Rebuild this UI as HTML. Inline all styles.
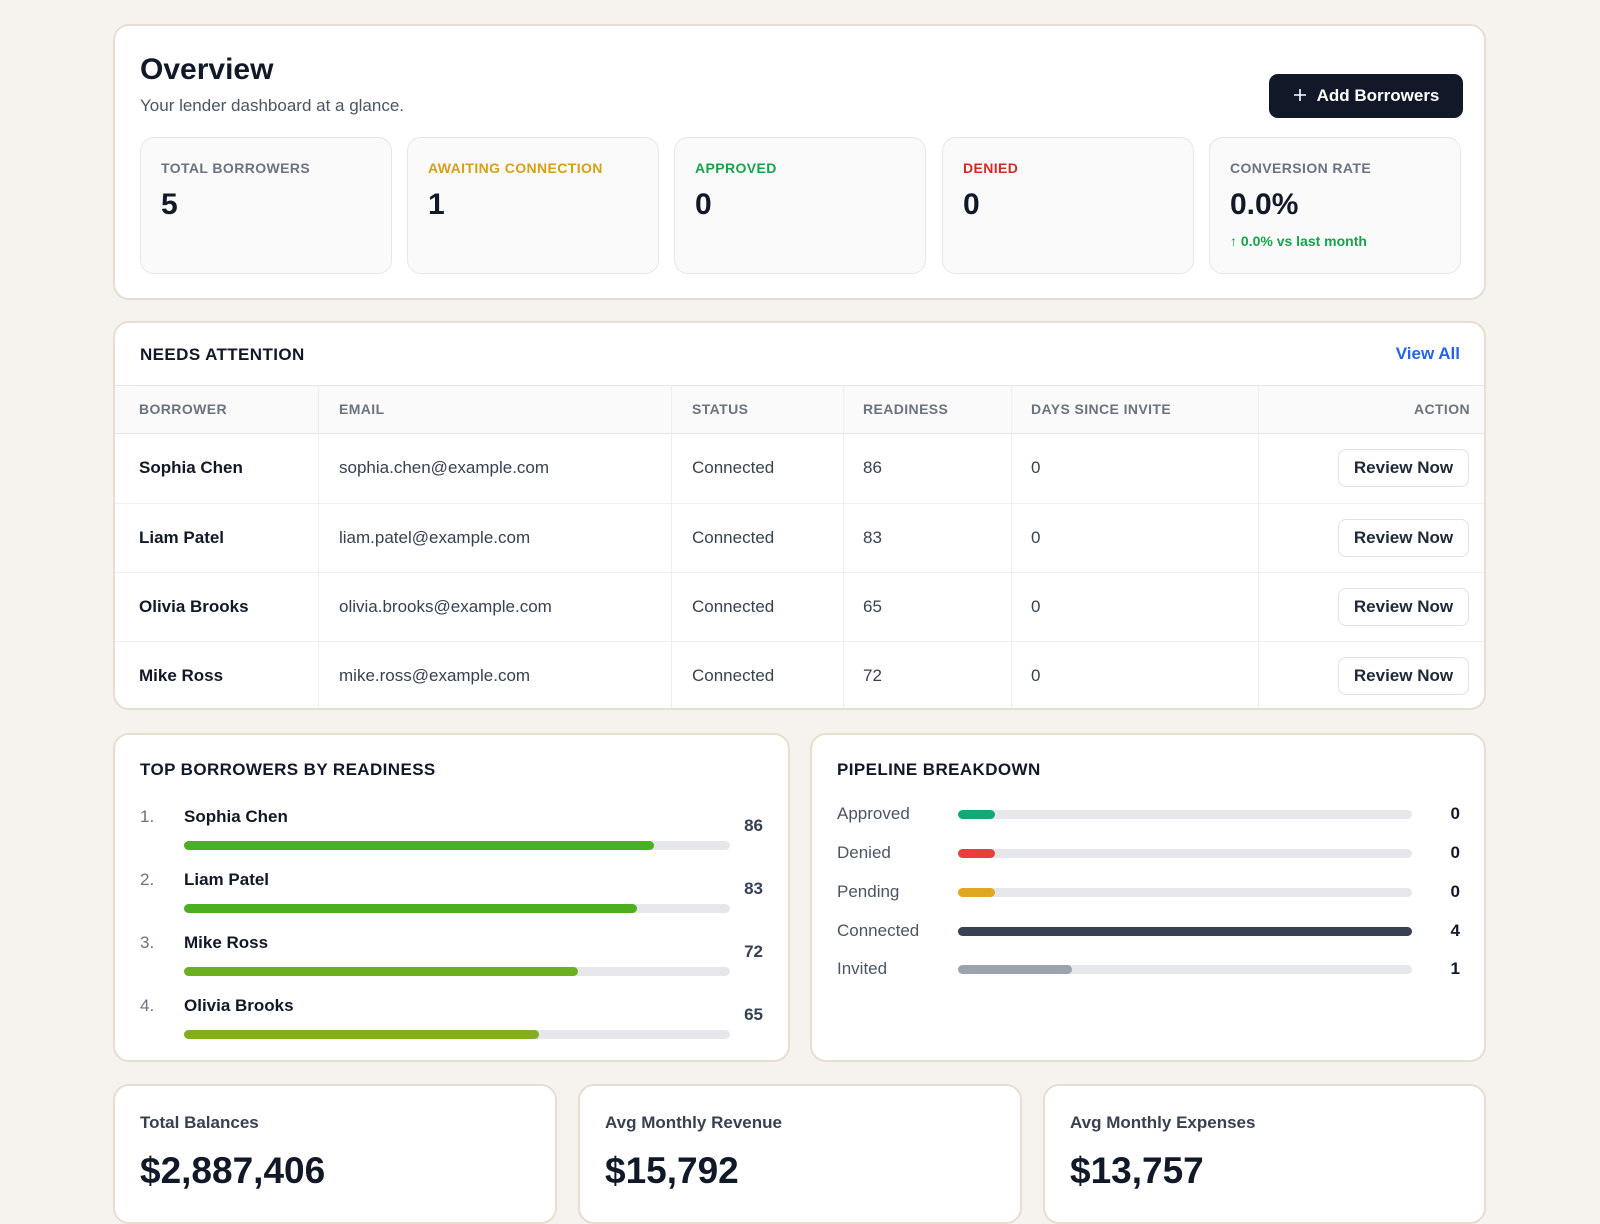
<!DOCTYPE html>
<html><head><meta charset="utf-8"><style>
*{box-sizing:border-box;margin:0;padding:0}
body{width:1600px;height:1200px;overflow:hidden;background:#f6f3ee;font-family:"Liberation Sans",Arial,sans-serif;color:#111827;position:relative}
.card{position:absolute;background:#fff;border:2px solid #e7ded2;border-radius:16px;overflow:hidden}
.abs{position:absolute;white-space:nowrap}
.stat{position:absolute;top:111px;width:252px;height:137px;background:#fafafa;border:1px solid #e7e7ea;border-radius:14px}
.stat .l{position:absolute;left:20px;top:22px;font-size:14px;font-weight:bold;letter-spacing:.4px;color:#6b7280}
.stat .v{position:absolute;left:20px;top:50px;font-size:30px;font-weight:bold;color:#111827}
.th{position:absolute;top:0;height:49px;line-height:49px;font-size:14px;font-weight:bold;letter-spacing:.4px;color:#6b7280}
.row{position:absolute;left:0;width:1372px;height:69px;border-top:1px solid #eef0f3}
.row div{position:absolute;top:0;line-height:68px;font-size:17px;color:#374151}
.vl{position:absolute;width:1px;background:#eceef2}
.row .btn{position:absolute;right:18px;top:15px;width:131px;height:38px;border:1px solid #dfe2e7;border-radius:8px;text-align:center;line-height:36px;font-weight:bold;color:#1f2937;font-size:17px}
.sec{font-size:17px;font-weight:bold;letter-spacing:.4px;color:#111827}
.track{position:absolute;height:9px;border-radius:5px;background:#e5e7eb}
.fill{position:absolute;left:0;top:0;height:9px;border-radius:5px}
</style></head><body>

<div class="card" style="left:113px;top:24px;width:1373px;height:276px">
  <div class="abs" style="left:25px;top:27px;font-size:30px;font-weight:bold">Overview</div>
  <div class="abs" style="left:25px;top:70px;font-size:17px;color:#4b5563">Your lender dashboard at a glance.</div>
  <div class="abs" style="left:1154px;top:48px;width:194px;height:44px;background:#111827;border-radius:9px;color:#fff;font-size:17px;font-weight:bold;line-height:44px;text-align:center">
    <svg width="14" height="14" viewBox="0 0 14 14" style="vertical-align:-1px;margin-right:10px"><path d="M7 1v12M1 7h12" stroke="#fff" stroke-width="1.6"/></svg>Add Borrowers</div>
  <div class="stat" style="left:25px"><div class="l">TOTAL BORROWERS</div><div class="v">5</div></div>
  <div class="stat" style="left:292px"><div class="l" style="color:#d4a017">AWAITING CONNECTION</div><div class="v">1</div></div>
  <div class="stat" style="left:559px"><div class="l" style="color:#16a34a">APPROVED</div><div class="v">0</div></div>
  <div class="stat" style="left:827px"><div class="l" style="color:#dc2626">DENIED</div><div class="v">0</div></div>
  <div class="stat" style="left:1094px"><div class="l">CONVERSION RATE</div><div class="v">0.0%</div>
    <div class="abs" style="left:20px;top:95px;font-size:14px;font-weight:bold;color:#16a34a">↑ 0.0% vs last month</div></div>
</div>

<div class="card" style="left:113px;top:321px;width:1373px;height:389px">
  <div class="abs sec" style="left:25px;top:22px">NEEDS ATTENTION</div>
  <div class="abs" style="right:24px;top:21px;font-size:17px;font-weight:bold;color:#2563eb">View All</div>
  <div style="position:absolute;left:0;top:62px;width:1373px;height:326px">
    <div style="position:absolute;left:0;top:0;width:1373px;height:49px;background:#fafafa;border-top:1px solid #e5e7eb;border-bottom:1px solid #e5e7eb"></div>
    <div class="th" style="left:24px">BORROWER</div>
    <div class="th" style="left:224px">EMAIL</div>
    <div class="th" style="left:577px">STATUS</div>
    <div class="th" style="left:748px">READINESS</div>
    <div class="th" style="left:916px">DAYS SINCE INVITE</div>
    <div class="th" style="right:18px">ACTION</div>
    <div class="vl" style="left:203px;top:0;height:326px"></div>
    <div class="vl" style="left:556px;top:0;height:326px"></div>
    <div class="vl" style="left:728px;top:0;height:326px"></div>
    <div class="vl" style="left:896px;top:0;height:326px"></div>
    <div class="vl" style="left:1143px;top:0;height:326px"></div>
    <div class="row" style="top:49px;border-top:none"><div style="left:24px;font-weight:bold;color:#111827">Sophia Chen</div><div style="left:224px">sophia.chen@example.com</div><div style="left:577px">Connected</div><div style="left:748px">86</div><div style="left:916px">0</div><div class="btn">Review Now</div></div>
    <div class="row" style="top:118px"><div style="left:24px;font-weight:bold;color:#111827">Liam Patel</div><div style="left:224px">liam.patel@example.com</div><div style="left:577px">Connected</div><div style="left:748px">83</div><div style="left:916px">0</div><div class="btn">Review Now</div></div>
    <div class="row" style="top:187px"><div style="left:24px;font-weight:bold;color:#111827">Olivia Brooks</div><div style="left:224px">olivia.brooks@example.com</div><div style="left:577px">Connected</div><div style="left:748px">65</div><div style="left:916px">0</div><div class="btn">Review Now</div></div>
    <div class="row" style="top:256px"><div style="left:24px;font-weight:bold;color:#111827">Mike Ross</div><div style="left:224px">mike.ross@example.com</div><div style="left:577px">Connected</div><div style="left:748px">72</div><div style="left:916px">0</div><div class="btn">Review Now</div></div>
  </div>
</div>

<div class="card" style="left:113px;top:733px;width:677px;height:329px">
  <div class="abs sec" style="left:25px;top:25px">TOP BORROWERS BY READINESS</div>
  <div class="abs" style="left:25px;top:72px;font-size:17px;color:#6b7280">1.</div>
  <div class="abs" style="left:69px;top:72px;font-size:17px;font-weight:bold">Sophia Chen</div>
  <div class="abs" style="right:25px;top:81px;font-size:17px;font-weight:bold;color:#374151">86</div>
  <div class="track" style="left:69px;top:106px;width:546px"><div class="fill" style="width:470px;background:#4caf22"></div></div>
  <div class="abs" style="left:25px;top:135px;font-size:17px;color:#6b7280">2.</div>
  <div class="abs" style="left:69px;top:135px;font-size:17px;font-weight:bold">Liam Patel</div>
  <div class="abs" style="right:25px;top:144px;font-size:17px;font-weight:bold;color:#374151">83</div>
  <div class="track" style="left:69px;top:169px;width:546px"><div class="fill" style="width:453px;background:#4caf22"></div></div>
  <div class="abs" style="left:25px;top:198px;font-size:17px;color:#6b7280">3.</div>
  <div class="abs" style="left:69px;top:198px;font-size:17px;font-weight:bold">Mike Ross</div>
  <div class="abs" style="right:25px;top:207px;font-size:17px;font-weight:bold;color:#374151">72</div>
  <div class="track" style="left:69px;top:232px;width:546px"><div class="fill" style="width:394px;background:#6bb01f"></div></div>
  <div class="abs" style="left:25px;top:261px;font-size:17px;color:#6b7280">4.</div>
  <div class="abs" style="left:69px;top:261px;font-size:17px;font-weight:bold">Olivia Brooks</div>
  <div class="abs" style="right:25px;top:270px;font-size:17px;font-weight:bold;color:#374151">65</div>
  <div class="track" style="left:69px;top:295px;width:546px"><div class="fill" style="width:355px;background:#84ad1f"></div></div>
</div>

<div class="card" style="left:810px;top:733px;width:676px;height:329px">
  <div class="abs sec" style="left:25px;top:25px">PIPELINE BREAKDOWN</div>
  <div class="abs" style="left:25px;top:69px;font-size:17px;color:#4b5563">Approved</div>
  <div class="track" style="left:146px;top:75px;width:454px"><div class="fill" style="width:37px;background:#16a874"></div></div>
  <div class="abs" style="right:24px;top:69px;font-size:17px;font-weight:bold">0</div>
  <div class="abs" style="left:25px;top:108px;font-size:17px;color:#4b5563">Denied</div>
  <div class="track" style="left:146px;top:114px;width:454px"><div class="fill" style="width:37px;background:#ea3e3e"></div></div>
  <div class="abs" style="right:24px;top:108px;font-size:17px;font-weight:bold">0</div>
  <div class="abs" style="left:25px;top:147px;font-size:17px;color:#4b5563">Pending</div>
  <div class="track" style="left:146px;top:153px;width:454px"><div class="fill" style="width:37px;background:#e0a820"></div></div>
  <div class="abs" style="right:24px;top:147px;font-size:17px;font-weight:bold">0</div>
  <div class="abs" style="left:25px;top:186px;font-size:17px;color:#4b5563">Connected</div>
  <div class="track" style="left:146px;top:192px;width:454px"><div class="fill" style="width:454px;background:#374151"></div></div>
  <div class="abs" style="right:24px;top:186px;font-size:17px;font-weight:bold">4</div>
  <div class="abs" style="left:25px;top:224px;font-size:17px;color:#4b5563">Invited</div>
  <div class="track" style="left:146px;top:230px;width:454px"><div class="fill" style="width:114px;background:#9ca3af"></div></div>
  <div class="abs" style="right:24px;top:224px;font-size:17px;font-weight:bold">1</div>
</div>

<div class="card" style="left:113px;top:1084px;width:444px;height:140px">
  <div class="abs" style="left:25px;top:27px;font-size:17px;font-weight:bold;color:#374151">Total Balances</div>
  <div class="abs" style="left:25px;top:64px;font-size:37px;font-weight:bold">$2,887,406</div>
</div>
<div class="card" style="left:578px;top:1084px;width:444px;height:140px">
  <div class="abs" style="left:25px;top:27px;font-size:17px;font-weight:bold;color:#374151">Avg Monthly Revenue</div>
  <div class="abs" style="left:25px;top:64px;font-size:37px;font-weight:bold">$15,792</div>
</div>
<div class="card" style="left:1043px;top:1084px;width:443px;height:140px">
  <div class="abs" style="left:25px;top:27px;font-size:17px;font-weight:bold;color:#374151">Avg Monthly Expenses</div>
  <div class="abs" style="left:25px;top:64px;font-size:37px;font-weight:bold">$13,757</div>
</div>
</body></html>
